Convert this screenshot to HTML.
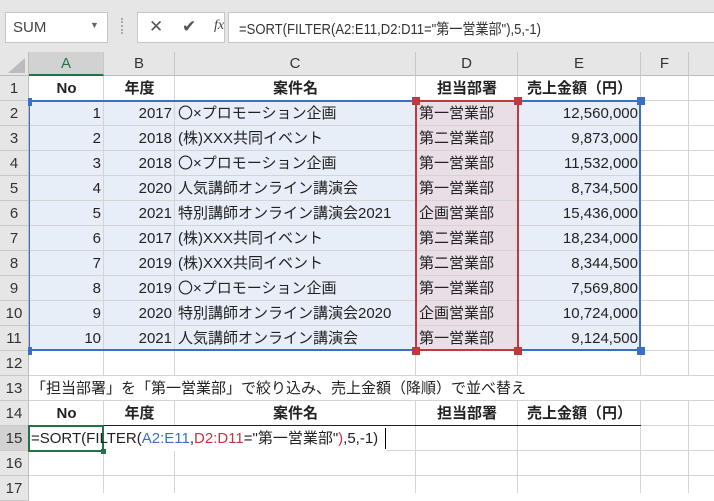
<!DOCTYPE html>
<html><head><meta charset="utf-8"><style>
*{margin:0;padding:0;box-sizing:border-box}
body{width:714px;height:493px;overflow:hidden;background:#fff;position:relative;font-family:"Liberation Sans","Noto Sans CJK JP",sans-serif;font-size:15px;color:#222}
.top{position:absolute;left:0;top:0;width:714px;height:52px;background:#e6e6e6}
.box{position:absolute;background:#fff;border:1px solid #c6c6c6}
.a{position:absolute}
.ch{position:absolute;top:52px;height:24px;background:#e6e6e6;border-right:1px solid #c8c8c8;border-bottom:1px solid #bdbdbd;text-align:center;line-height:24px;font-size:15px;color:#333}
.rh{position:absolute;left:0;width:29px;height:25px;background:#e6e6e6;border-bottom:1px solid #c8c8c8;border-right:1px solid #bdbdbd;text-align:center;line-height:25px;font-size:15px;color:#333}
.vl{position:absolute;top:76px;width:1px;height:417px;background:#d4d4d4}
.hl{position:absolute;left:29px;width:685px;height:1px;background:#d4d4d4}
.c{position:absolute;height:25px;line-height:25px;white-space:nowrap;font-size:15px}
.r{text-align:right;padding-right:3px}
.b{font-weight:bold;text-align:center}
.h{width:8px;height:8px;position:absolute}
</style></head><body>
<div class="top"></div>
<div class="box" style="left:5px;top:12px;width:103px;height:31px"><span class="a" style="left:7px;top:6px;font-size:15px;color:#444">SUM</span><span class="a" style="left:84px;top:7px;font-size:9px;color:#666">▼</span></div>
<div class="a" style="left:121px;top:18px;width:2px;height:16px;border-left:2px dotted #aaa"></div>
<div class="box" style="left:137px;top:12px;width:88px;height:31px"><span class="a" style="left:11px;top:4px;font-size:17px;color:#555">✕</span><span class="a" style="left:44px;top:4px;font-size:17px;color:#555">✔</span><span class="a" style="left:76px;top:5px;font-size:14px;font-style:italic;font-family:'Liberation Serif',serif;color:#444">fx</span></div>
<div class="box" style="left:228px;top:12px;width:490px;height:31px"><span class="a" style="left:10px;top:5px;font-size:15px;color:#333;transform:scaleX(0.87);transform-origin:0 0;white-space:nowrap">=SORT(FILTER(A2:E11,D2:D11="第一営業部"),5,-1)</span></div>

<div class="a" style="left:0;top:52px;width:29px;height:24px;background:#e6e6e6;border-right:1px solid #bdbdbd;border-bottom:1px solid #bdbdbd"></div>
<div class="a" style="left:8px;top:58px;width:0;height:0;border-left:17px solid transparent;border-bottom:15px solid #bcbcbc"></div>
<div class="ch" style="left:29px;width:75px;background:#d2d2d2;border-bottom:2px solid #217346;color:#217346">A</div>
<div class="ch" style="left:104px;width:71px">B</div>
<div class="ch" style="left:175px;width:241px">C</div>
<div class="ch" style="left:416px;width:102px">D</div>
<div class="ch" style="left:518px;width:123px">E</div>
<div class="ch" style="left:641px;width:48px">F</div>
<div class="ch" style="left:689px;width:30px"></div>

<div class="a" style="left:29px;top:101px;width:612px;height:250px;background:#e8eef8"></div>
<div class="a" style="left:416px;top:101px;width:102px;height:250px;background:#e9dde6"></div>

<div class="vl" style="left:103px"></div><div class="vl" style="left:174px"></div><div class="vl" style="left:415px"></div><div class="vl" style="left:517px"></div><div class="vl" style="left:640px"></div><div class="vl" style="left:688px"></div>
<div class="hl" style="top:100px"></div><div class="hl" style="top:125px"></div><div class="hl" style="top:150px"></div><div class="hl" style="top:175px"></div><div class="hl" style="top:200px"></div><div class="hl" style="top:225px"></div><div class="hl" style="top:250px"></div><div class="hl" style="top:275px"></div><div class="hl" style="top:300px"></div><div class="hl" style="top:325px"></div><div class="hl" style="top:350px"></div><div class="hl" style="top:375px"></div><div class="hl" style="top:400px"></div><div class="hl" style="top:425px"></div><div class="hl" style="top:450px"></div><div class="hl" style="top:475px"></div>
<div class="a" style="left:29px;top:425px;width:612px;height:1px;background:#222"></div>
<div class="a" style="left:29px;top:376px;width:685px;height:24px;background:#fff"></div>

<div class="rh" style="top:76px">1</div><div class="rh" style="top:101px">2</div><div class="rh" style="top:126px">3</div><div class="rh" style="top:151px">4</div><div class="rh" style="top:176px">5</div><div class="rh" style="top:201px">6</div><div class="rh" style="top:226px">7</div><div class="rh" style="top:251px">8</div><div class="rh" style="top:276px">9</div><div class="rh" style="top:301px">10</div><div class="rh" style="top:326px">11</div><div class="rh" style="top:351px">12</div><div class="rh" style="top:376px">13</div><div class="rh" style="top:401px">14</div><div class="rh" style="top:426px;background:#d2d2d2">15</div><div class="rh" style="top:451px">16</div><div class="rh" style="top:476px">17</div>

<div class="c b" style="left:29px;top:76px;width:75px">No</div>
<div class="c b" style="left:104px;top:76px;width:71px">年度</div>
<div class="c b" style="left:175px;top:76px;width:241px">案件名</div>
<div class="c b" style="left:416px;top:76px;width:102px">担当部署</div>
<div class="c b" style="left:518px;top:76px;width:123px">売上金額（円）</div>

<div id="rows"></div>
<script>
var d=[[1,2017,"〇×プロモーション企画","第一営業部","12,560,000"],[2,2018,"(株)XXX共同イベント","第二営業部","9,873,000"],[3,2018,"〇×プロモーション企画","第一営業部","11,532,000"],[4,2020,"人気講師オンライン講演会","第一営業部","8,734,500"],[5,2021,"特別講師オンライン講演会2021","企画営業部","15,436,000"],[6,2017,"(株)XXX共同イベント","第二営業部","18,234,000"],[7,2019,"(株)XXX共同イベント","第二営業部","8,344,500"],[8,2019,"〇×プロモーション企画","第一営業部","7,569,800"],[9,2020,"特別講師オンライン講演会2020","企画営業部","10,724,000"],[10,2021,"人気講師オンライン講演会","第一営業部","9,124,500"]];
var h="";d.forEach(function(r,i){var t=101+i*25;
h+='<div class="c r" style="left:29px;top:'+t+'px;width:75px">'+r[0]+'</div><div class="c r" style="left:104px;top:'+t+'px;width:71px">'+r[1]+'</div><div class="c" style="left:178px;top:'+t+'px">'+r[2]+'</div><div class="c" style="left:419px;top:'+t+'px">'+r[3]+'</div><div class="c r" style="left:518px;top:'+t+'px;width:123px">'+r[4]+'</div>';});
document.getElementById("rows").innerHTML=h;
</script>

<div class="a" style="left:29px;top:100px;width:612px;height:251px;border:2px solid #3a6fc4;border-left-width:1px"></div>
<div class="a" style="left:415px;top:100px;width:104px;height:251px;border:2px solid #c0393f"></div>
<div class="h" style="left:412px;top:97px;background:#c0393f"></div><div class="h" style="left:514px;top:97px;background:#c0393f"></div>
<div class="h" style="left:412px;top:347px;background:#c0393f"></div><div class="h" style="left:514px;top:347px;background:#c0393f"></div>
<div class="h" style="left:637px;top:97px;background:#3a6fc4"></div><div class="h" style="left:637px;top:347px;background:#3a6fc4"></div>
<div class="a" style="left:28px;top:347px;width:4px;height:8px;background:#3a6fc4"></div>
<div class="a" style="left:28px;top:98px;width:4px;height:8px;background:#3a6fc4"></div>

<div class="c" style="left:31px;top:376px">「担当部署」を「第一営業部」で絞り込み、売上金額（降順）で並べ替え</div>
<div class="c b" style="left:29px;top:401px;width:75px">No</div>
<div class="c b" style="left:104px;top:401px;width:71px">年度</div>
<div class="c b" style="left:175px;top:401px;width:241px">案件名</div>
<div class="c b" style="left:416px;top:401px;width:102px">担当部署</div>
<div class="c b" style="left:518px;top:401px;width:123px">売上金額（円）</div>

<div class="a" style="left:29px;top:426px;width:358px;height:25px;background:#fff"></div>
<div class="a" style="left:28px;top:425px;width:76px;height:27px;border:2px solid #217346"></div>
<div class="a" style="left:101px;top:449px;width:5px;height:5px;background:#217346"></div>
<div class="c" style="left:31px;top:426px;font-size:15px">=SORT(FILTER(<span style="color:#3a6fc4">A2:E11</span>,<span style="color:#c0393f">D2:D11</span>="第一営業部"<span style="color:#c0393f">)</span>,5,-1)</div>
<div class="a" style="left:385px;top:428px;width:1px;height:21px;background:#000"></div>
</body></html>
